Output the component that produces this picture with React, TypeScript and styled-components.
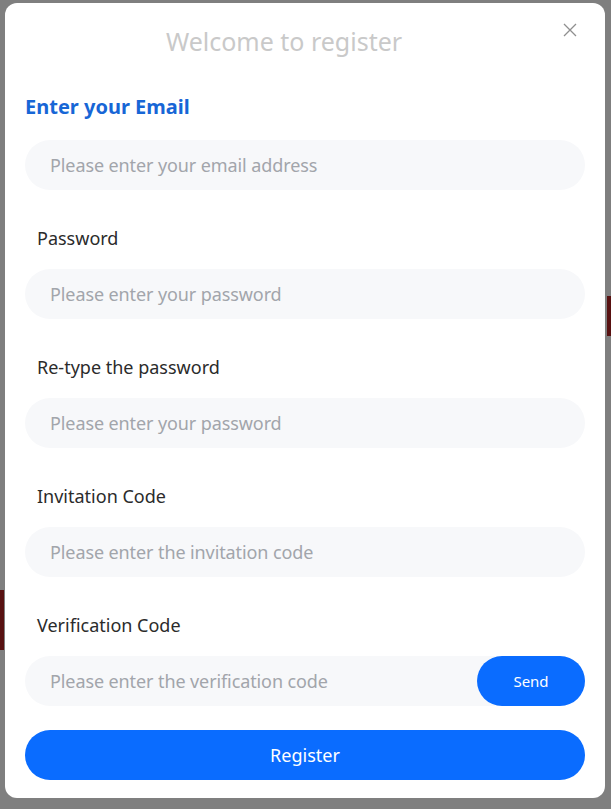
import React from "react";
import styled, { createGlobalStyle } from "styled-components";

const Global = createGlobalStyle`
  html, body { margin: 0; padding: 0; }
  body { font-family: "Noto Sans", "Open Sans", sans-serif; background: #fff; }
  * { box-sizing: border-box; }
`;

const Page = styled.div`
  width: 611px;
  height: 809px;
  overflow: hidden;
  background: #fff;
  display: flex;
  flex-direction: column;
`;

const PageRow = styled.div<{ $top: number; $h: number }>`
  display: flex;
  justify-content: space-between;
  height: ${(p) => p.$h}px;
  margin-top: ${(p) => p.$top}px;
`;

const RedBlock = styled.div`
  width: 4px;
  background: #b02222;
`;

const Overlay = styled.div`
  position: fixed;
  inset: 0;
  background: rgba(0, 0, 0, 0.5);
  padding: 3px 6px 11px 5px;
  display: flex;
`;

const Modal = styled.div`
  position: relative;
  flex: 1;
  background: #fff;
  border-radius: 12px;
  padding: 22px 20px 0;
  display: flex;
  flex-direction: column;
`;

const Title = styled.h2`
  margin: 0;
  padding-right: 42px;
  text-align: center;
  font-size: 25px;
  font-weight: 400;
  line-height: 32px;
  color: #c9c9c9;
`;

const Close = styled.button`
  position: absolute;
  top: 16px;
  right: 24px;
  width: 22px;
  height: 22px;
  padding: 0;
  border: 0;
  background: transparent;
  display: flex;
  align-items: center;
  justify-content: center;
  cursor: pointer;
`;

const Heading = styled.div`
  margin-top: 36px;
  font-size: 20px;
  font-weight: 700;
  line-height: 28px;
  color: #1766d6;
`;

const Label = styled.div`
  margin-top: 35px;
  padding-left: 12px;
  font-size: 18px;
  line-height: 26px;
  color: #2b2b2b;
`;

const InputWrap = styled.div<{ $first?: boolean }>`
  margin-top: ${(p) => (p.$first ? 19 : 18)}px;
  height: 50px;
  border-radius: 25px;
  background: #f7f8fa;
  display: flex;
  align-items: center;
`;

const Input = styled.input`
  flex: 1;
  min-width: 0;
  height: 100%;
  border: 0;
  outline: none;
  background: transparent;
  padding: 0 25px;
  font-family: inherit;
  font-size: 18px;
  letter-spacing: -0.1px;
  color: #333;
  &::placeholder { color: #a2a5ab; }
`;

const SendButton = styled.button`
  width: 108px;
  height: 50px;
  border: 0;
  border-radius: 25px;
  background: #0a6cff;
  color: #fff;
  font-family: inherit;
  font-size: 15px;
  cursor: pointer;
`;

const RegisterButton = styled.button`
  margin-top: 24px;
  height: 50px;
  border: 0;
  border-radius: 25px;
  background: #0a6cff;
  color: #fff;
  font-family: inherit;
  font-size: 18px;
  cursor: pointer;
`;

const fields = [
  { label: "Password", placeholder: "Please enter your password", type: "password" },
  { label: "Re-type the password", placeholder: "Please enter your password", type: "password" },
  { label: "Invitation Code", placeholder: "Please enter the invitation code", type: "text" },
];

export default function App() {
  return (
    <>
      <Global />
      <Page>
        <PageRow $top={296} $h={40}>
          <span />
          <RedBlock />
        </PageRow>
        <PageRow $top={254} $h={60}>
          <RedBlock />
          <span />
        </PageRow>
      </Page>
      <Overlay>
        <Modal>
          <Title>Welcome to register</Title>
          <Close aria-label="close">
            <svg width="14" height="14" viewBox="0 0 14 14">
              <path d="M1 1 L13 13 M13 1 L1 13" stroke="#8f8f8f" strokeWidth="1.3" fill="none" />
            </svg>
          </Close>
          <Heading>Enter your Email</Heading>
          <InputWrap $first>
            <Input type="text" placeholder="Please enter your email address" />
          </InputWrap>
          {fields.map((f) => (
            <React.Fragment key={f.label}>
              <Label>{f.label}</Label>
              <InputWrap>
                <Input type={f.type} placeholder={f.placeholder} />
              </InputWrap>
            </React.Fragment>
          ))}
          <Label>Verification Code</Label>
          <InputWrap>
            <Input type="text" placeholder="Please enter the verification code" />
            <SendButton>Send</SendButton>
          </InputWrap>
          <RegisterButton>Register</RegisterButton>
        </Modal>
      </Overlay>
    </>
  );
}
